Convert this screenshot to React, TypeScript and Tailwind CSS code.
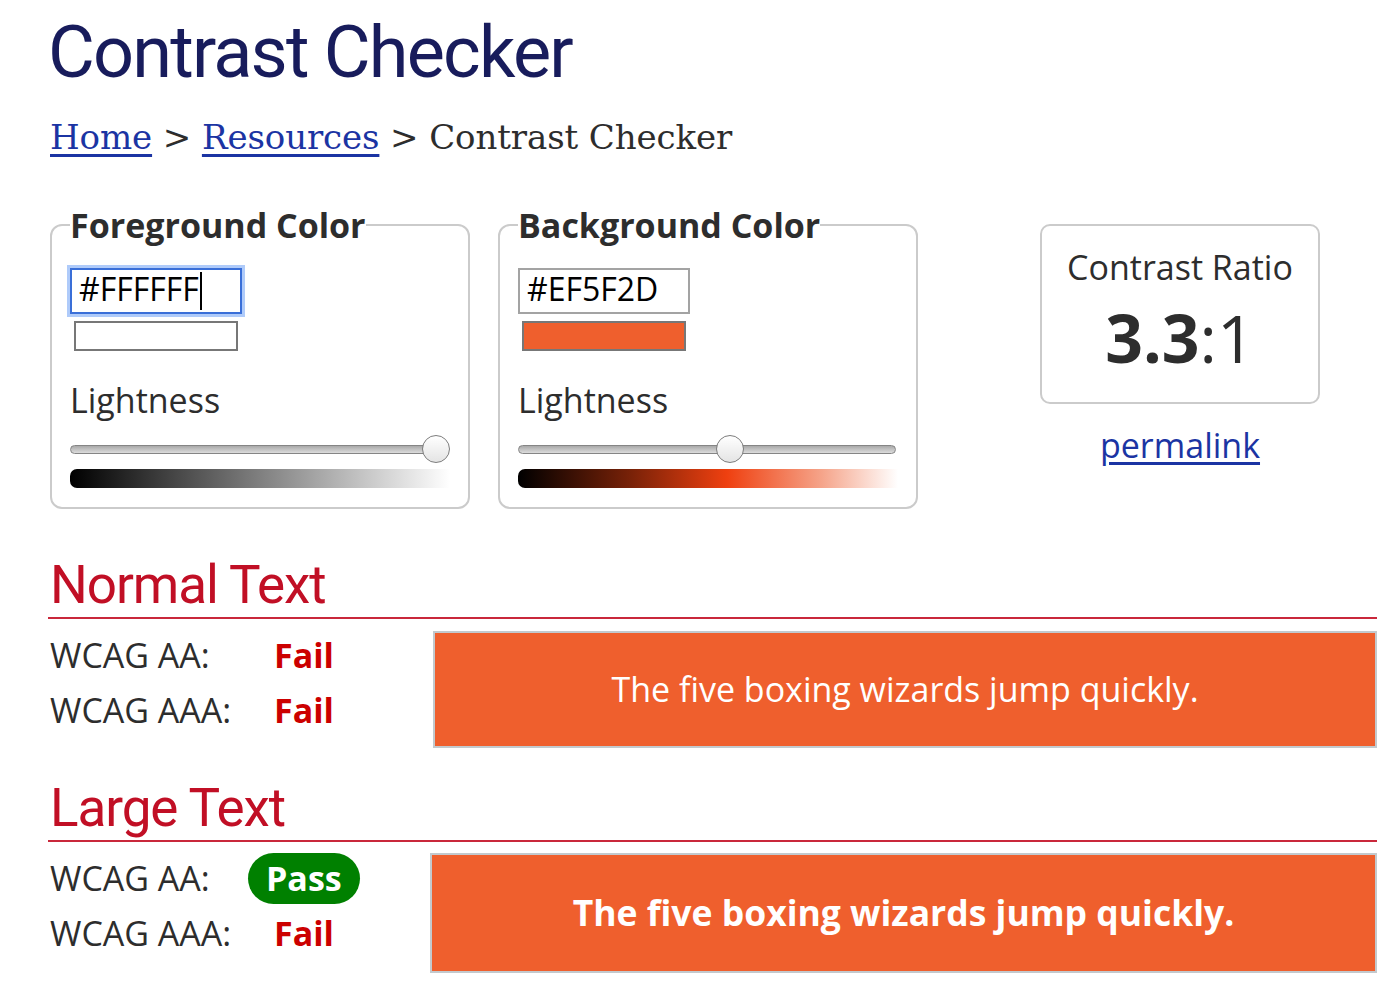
const sans = "font-['Open_Sans',sans-serif]";
const roboto = "font-['Roboto',sans-serif]";

function HexInput({ value, focused }: { value: string; focused?: boolean }) {
  return (
    <div
      className={
        focused
          ? 'flex h-[46px] w-[172px] items-center border-2 border-[#3a6fd8] pb-[5px] pl-[7px] text-[32px] text-black shadow-[0_0_0_3px_rgba(110,160,245,0.55)]'
          : 'flex h-[46px] w-[172px] items-center border-2 border-[#a3a3a3] pb-[5px] pl-[7px] text-[32px] text-black'
      }
    >
      <span>{value}</span>
      {focused && <span className="ml-[1px] mt-[5px] inline-block h-[38px] w-[2px] bg-black" />}
    </div>
  );
}

function Slider({ thumb }: { thumb: string }) {
  return (
    <div className="relative mt-[15px] h-[28px]">
      <div className="absolute left-0 right-[2px] top-[10px] h-[9px] rounded-full border border-[#858585] bg-[linear-gradient(to_bottom,#a9a9a9,#dcdcdc)]" />
      <div
        className={`absolute top-0 h-[28px] w-[28px] rounded-full border-[1.5px] border-[#7d7d7d] bg-[linear-gradient(to_bottom,#ffffff,#e4e4e4)] ${thumb}`}
      />
    </div>
  );
}

function ColorBox({
  title,
  value,
  focused,
  swatch,
  thumb,
  gradient,
  className,
}: {
  title: string;
  value: string;
  focused?: boolean;
  swatch: string;
  thumb: string;
  gradient: string;
  className?: string;
}) {
  return (
    <fieldset className={`w-[420px] rounded-[12px] border-2 border-[#cbcbcb] px-[18px] pb-[19px] ${className ?? ''}`}>
      <legend className="text-[34px] font-bold leading-[40px] text-[#2d2d2d]">{title}</legend>
      <div className="mt-[23px]">
        <HexInput value={value} focused={focused} />
      </div>
      <div className={`ml-[4px] mt-[7px] h-[30px] w-[164px] border-2 border-[#777] ${swatch}`} />
      <div className="mt-[29px] text-[34px] leading-[40px] text-[#2d2d2d]">Lightness</div>
      <Slider thumb={thumb} />
      <div className={`mt-[6px] h-[19px] rounded-l-[7px] ${gradient}`} />
    </fieldset>
  );
}

function Result({ label, pass }: { label: string; pass?: boolean }) {
  return (
    <div className="flex h-[55px] items-center">
      <span className="w-[224px] text-[#2d2d2d]">{label}</span>
      {pass ? (
        <span className="-ml-[26px] flex h-[51px] items-center rounded-full bg-[#008000] px-[18px] font-bold text-white">
          Pass
        </span>
      ) : (
        <span className="font-bold text-[#cc0000]">Fail</span>
      )}
    </div>
  );
}

function Section({
  title,
  large,
  aa,
  className,
}: {
  title: string;
  large?: boolean;
  aa?: boolean;
  className?: string;
}) {
  return (
    <section className={className}>
      <h2
        className={`${roboto} -ml-[2px] border-b-2 border-[#c9283b] pb-[2px] pl-[2px] text-[53px] leading-[60px] tracking-[-0.02em] text-[#c10f25]`}
      >
        {title}
      </h2>
      <div className="mt-[9px] flex items-start">
        <div className={large ? 'w-[380px] text-[34px] leading-[55px]' : 'w-[383px] text-[34px] leading-[55px]'}>
          <Result label="WCAG AA:" pass={aa} />
          <Result label="WCAG AAA:" />
        </div>
        <div
          className={
            large
              ? 'mt-[2px] flex h-[120px] flex-1 items-center justify-center border-2 border-[#c3c9cd] bg-[#EF5F2D] text-[35.5px] font-bold text-white'
              : 'mt-[3px] flex h-[117px] flex-1 items-center justify-center border-2 border-[#c3c9cd] bg-[#EF5F2D] text-[34px] text-white'
          }
        >
          The five boxing wizards jump quickly.
        </div>
      </div>
    </section>
  );
}

export default function App() {
  return (
    <div className={`${sans} min-h-screen bg-white pl-[50px] pr-[23px] text-[#2d2d2d]`}>
      <h1 className={`${roboto} -ml-[2px] pt-[18px] text-[72px] leading-[70px] tracking-[-0.025em] text-[#181c5c]`}>
        Contrast Checker
      </h1>

      <nav className="mt-[29px] font-['DejaVu_Serif',serif] text-[34px] leading-[40px] tracking-[-0.003em] text-[#2d2d2d]">
        <a href="#" className="text-[#1b34a3] underline underline-offset-[5px]">
          Home
        </a>{' '}
        &gt;{' '}
        <a href="#" className="text-[#1b34a3] underline underline-offset-[5px]">
          Resources
        </a>{' '}
        &gt; Contrast Checker
      </nav>

      <div className="mt-[48px] flex items-start">
        <ColorBox
          title="Foreground Color"
          value="#FFFFFF"
          focused
          swatch="bg-white"
          thumb="left-[352px]"
          gradient="bg-[linear-gradient(to_right,#000000,#ffffff)]"
        />
        <ColorBox
          title="Background Color"
          value="#EF5F2D"
          swatch="bg-[#EF5F2D]"
          thumb="left-[198px]"
          gradient="bg-[linear-gradient(to_right,#000000,#7a2208_30%,#ef4010_55%,#f5a48a_80%,#ffffff)]"
          className="ml-[28px]"
        />
        <div className="ml-[122px] mt-[19px] w-[280px]">
          <div className="flex h-[180px] flex-col items-center rounded-[10px] border-2 border-[#cbcbcb] pt-[21px]">
            <div className="text-[34px] leading-[40px]">Contrast Ratio</div>
            <div className="mt-[15px] text-[66px] leading-[70px]">
              <span className="font-bold">3.3</span>:1
            </div>
          </div>
          <div className="mt-[21px] text-center text-[34px] leading-[40px]">
            <a href="#" className="text-[#1b34a3] underline underline-offset-[4px]">
              permalink
            </a>
          </div>
        </div>
      </div>

      <Section title="Normal Text" className="mt-[46px]" />
      <Section title="Large Text" large aa className="mt-[30px]" />
    </div>
  );
}
